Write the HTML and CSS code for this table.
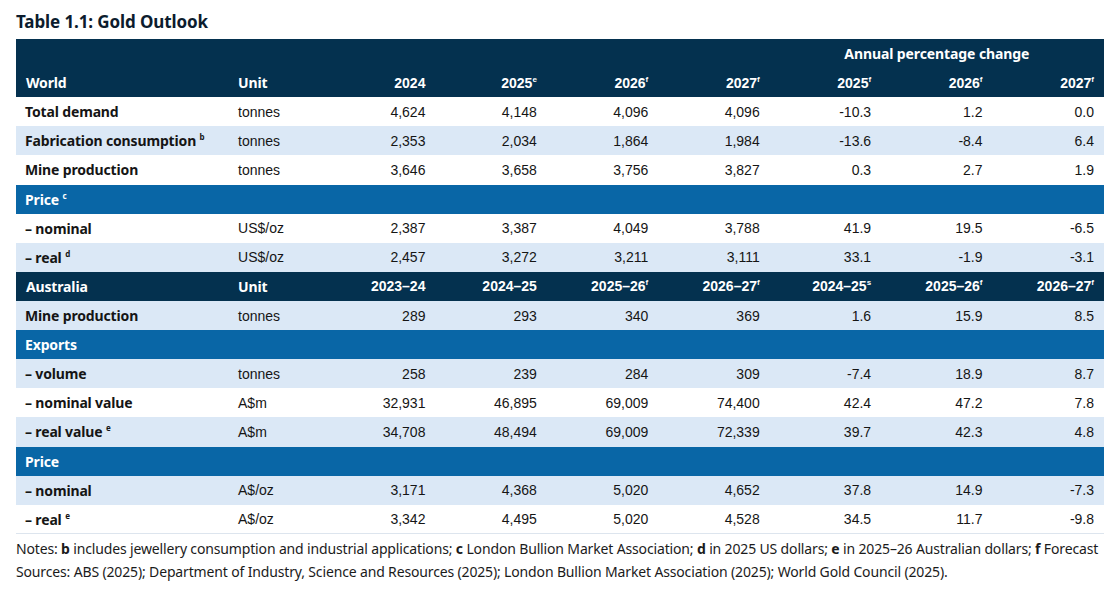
FILE: index.html
```html
<!DOCTYPE html>
<html lang="en">
<head>
<meta charset="utf-8">
<title>Table 1.1: Gold Outlook</title>
<link rel="stylesheet" href="styles.css">
</head>
<body>
<div class="page">
  <h1 class="title">Table 1.1: Gold Outlook</h1>
  <table class="outlook">
    <colgroup>
      <col class="c-label"><col class="c-unit">
      <col class="c-num"><col class="c-num"><col class="c-num"><col class="c-num">
      <col class="c-num"><col class="c-num"><col class="c-num">
    </colgroup>
    <thead>
      <tr class="dark">
        <th colspan="6"></th>
        <th colspan="3" class="span">Annual percentage change</th>
      </tr>
      <tr class="dark">
        <th class="lab">World</th><th class="lab">Unit</th>
        <th class="num">2024</th><th class="num">2025<sup>e</sup></th><th class="num">2026<sup>f</sup></th><th class="num">2027<sup>f</sup></th>
        <th class="num">2025<sup>f</sup></th><th class="num">2026<sup>f</sup></th><th class="num">2027<sup>f</sup></th>
      </tr>
    </thead>
    <tbody>
      <tr class="white"><td class="lab">Total demand</td><td class="unit">tonnes</td><td>4,624</td><td>4,148</td><td>4,096</td><td>4,096</td><td>-10.3</td><td>1.2</td><td>0.0</td></tr>
      <tr class="light"><td class="lab">Fabrication consumption <sup>b</sup></td><td class="unit">tonnes</td><td>2,353</td><td>2,034</td><td>1,864</td><td>1,984</td><td>-13.6</td><td>-8.4</td><td>6.4</td></tr>
      <tr class="white"><td class="lab">Mine production</td><td class="unit">tonnes</td><td>3,646</td><td>3,658</td><td>3,756</td><td>3,827</td><td>0.3</td><td>2.7</td><td>1.9</td></tr>
      <tr class="mid"><td class="lab" colspan="9">Price <sup>c</sup></td></tr>
      <tr class="white"><td class="lab">– nominal</td><td class="unit">US$/oz</td><td>2,387</td><td>3,387</td><td>4,049</td><td>3,788</td><td>41.9</td><td>19.5</td><td>-6.5</td></tr>
      <tr class="light"><td class="lab">– real <sup>d</sup></td><td class="unit">US$/oz</td><td>2,457</td><td>3,272</td><td>3,211</td><td>3,111</td><td>33.1</td><td>-1.9</td><td>-3.1</td></tr>
      <tr class="dark"><th class="lab">Australia</th><th class="lab">Unit</th><th class="num">2023–24</th><th class="num">2024–25</th><th class="num">2025–26<sup>f</sup></th><th class="num">2026–27<sup>f</sup></th><th class="num">2024–25<sup>s</sup></th><th class="num">2025–26<sup>f</sup></th><th class="num">2026–27<sup>f</sup></th></tr>
      <tr class="light"><td class="lab">Mine production</td><td class="unit">tonnes</td><td>289</td><td>293</td><td>340</td><td>369</td><td>1.6</td><td>15.9</td><td>8.5</td></tr>
      <tr class="mid"><td class="lab" colspan="9">Exports</td></tr>
      <tr class="light"><td class="lab">– volume</td><td class="unit">tonnes</td><td>258</td><td>239</td><td>284</td><td>309</td><td>-7.4</td><td>18.9</td><td>8.7</td></tr>
      <tr class="white"><td class="lab">– nominal value</td><td class="unit">A$m</td><td>32,931</td><td>46,895</td><td>69,009</td><td>74,400</td><td>42.4</td><td>47.2</td><td>7.8</td></tr>
      <tr class="light"><td class="lab">– real value <sup>e</sup></td><td class="unit">A$m</td><td>34,708</td><td>48,494</td><td>69,009</td><td>72,339</td><td>39.7</td><td>42.3</td><td>4.8</td></tr>
      <tr class="mid"><td class="lab" colspan="9">Price</td></tr>
      <tr class="light"><td class="lab">– nominal</td><td class="unit">A$/oz</td><td>3,171</td><td>4,368</td><td>5,020</td><td>4,652</td><td>37.8</td><td>14.9</td><td>-7.3</td></tr>
      <tr class="white last"><td class="lab">– real <sup>e</sup></td><td class="unit">A$/oz</td><td>3,342</td><td>4,495</td><td>5,020</td><td>4,528</td><td>34.5</td><td>11.7</td><td>-9.8</td></tr>
    </tbody>
  </table>
  <p class="note">Notes: <b>b</b> includes jewellery consumption and industrial applications; <b>c</b> London Bullion Market Association; <b>d</b> in 2025 US dollars; <b>e</b> in 2025–26 Australian dollars; <b>f</b> Forecast</p>
  <p class="note">Sources: ABS (2025); Department of Industry, Science and Resources (2025); London Bullion Market Association (2025); World Gold Council (2025).</p>
</div>
</body>
</html>
```
FILE: styles.css
```css
html, body {
  margin: 0;
  padding: 0;
  background: #ffffff;
}
.page {
  padding: 12px 0 0 16px;
  width: 1088px;
  font-family: "Noto Sans", "Liberation Sans", sans-serif;
  color: #111111;
}
.title {
  margin: 0 0 7px 0;
  font-size: 17px;
  line-height: 20px;
  font-weight: 700;
  color: #0c1c2e;
  letter-spacing: -0.1px;
}
.outlook {
  border-collapse: collapse;
  width: 1088px;
  table-layout: fixed;
}
.c-label { width: 212px; }
.c-unit { width: 96px; }
.c-num { width: 111.4px; }
.outlook tr { height: 29.12px; }
.outlook th, .outlook td {
  padding: 0 10px;
  white-space: nowrap;
  vertical-align: middle;
}
.outlook td {
  font-family: "Liberation Sans", Arial, sans-serif;
  font-size: 14px;
  text-align: right;
  color: #151515;
}
.outlook td.unit {
  text-align: left;
}
.outlook td.lab, .outlook th.lab {
  text-align: left;
  font-family: "Noto Sans", "Liberation Sans", sans-serif;
  font-weight: 700;
  font-size: 14px;
  letter-spacing: -0.15px;
}
.outlook th {
  color: #ffffff;
  font-weight: 700;
  font-size: 14px;
}
.outlook th.num {
  text-align: right;
  font-family: "Liberation Sans", Arial, sans-serif;
}
.outlook th.span {
  text-align: center;
  font-family: "Noto Sans", "Liberation Sans", sans-serif;
  letter-spacing: -0.1px;
}
.outlook td.lab { padding-left: 9px; }
.outlook th.lab { padding-left: 10px; }
.outlook td.unit { padding-left: 10px; }
.dark { background: #04314f; }
.mid { background: #0966a6; }
.mid td.lab { color: #ffffff; }
.light { background: #dbe8f6; }
.white { background: #ffffff; }
.last { border-bottom: 1px solid #dde5ee; }
sup {
  font-size: 8px;
  line-height: 0;
  vertical-align: 0;
  position: relative;
  top: -6px;
  font-weight: 700;
}
.note {
  margin: 0;
  font-size: 14px;
  line-height: 23px;
  color: #1b1b1b;
  letter-spacing: -0.15px;
}
.note:first-of-type { margin-top: 3px; }
.note b { font-weight: 700; }
```
